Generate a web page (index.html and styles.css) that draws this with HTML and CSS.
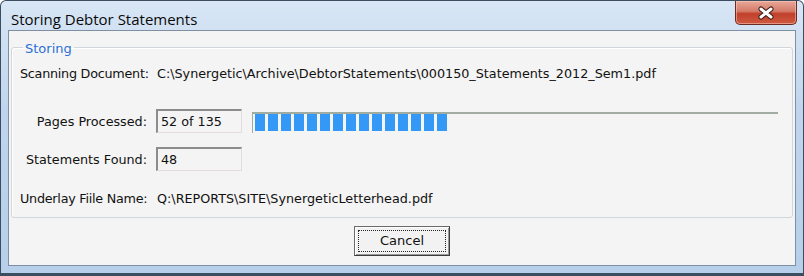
FILE: index.html
```html
<!DOCTYPE html>
<html lang="en">
<head>
    <meta charset="UTF-8">
    <title>Storing Debtor Statements</title>
    <link rel="stylesheet" href="styles.css">
</head>
<body>
    <div class="window">
        <div class="titlebar">
            <span class="title">Storing Debtor Statements</span>
            <button class="close-btn" title="Close">
                <svg width="18" height="14" viewBox="0 0 18 14">
                    <path d="M4 3 L14 11 M14 3 L4 11" stroke="#3a1a16" stroke-width="5" stroke-linecap="round"/>
                    <path d="M4 3 L14 11 M14 3 L4 11" stroke="#ffffff" stroke-width="3" stroke-linecap="round"/>
                </svg>
            </button>
        </div>
        <div class="client">
            <fieldset class="group">
                <legend>Storing</legend>
                <div class="row row-first">
                    <div class="label tight">Scanning Document:</div>
                    <div class="value">C:\Synergetic\Archive\DebtorStatements\000150_Statements_2012_Sem1.pdf</div>
                </div>
                <div class="row row-box">
                    <div class="label right">Pages Processed:</div>
                    <div class="textbox">52 of 135</div>
                    <div class="progress">
                        <div class="progress-fill" style="width: 192px"></div>
                    </div>
                </div>
                <div class="row row-box">
                    <div class="label right">Statements Found:</div>
                    <div class="textbox">48</div>
                </div>
                <div class="row row-last">
                    <div class="label tight">Underlay Fiile Name:</div>
                    <div class="value">Q:\REPORTS\SITE\SynergeticLetterhead.pdf</div>
                </div>
            </fieldset>
            <div class="actions">
                <button class="btn"><span class="btn-focus">Cancel</span></button>
            </div>
        </div>
    </div>
</body>
</html>
```

FILE: styles.css
```css
body {
    margin: 0;
    background: #ffffff;
}
.window {
    width: 804px;
    height: 276px;
    box-sizing: border-box;
    display: flex;
    flex-direction: column;
    border: 1px solid #3d4d60;
    border-bottom-width: 3px;
    border-radius: 6px 6px 0 0;
    background: linear-gradient(to bottom, #d8e6f5, #c0d5ed 40%, #b7cfea);
    padding: 0 7px 7px 7px;
}
.titlebar {
    height: 29px;
    display: flex;
    justify-content: space-between;
    align-items: flex-start;
}
.title {
    font-family: "Open Sans", sans-serif;
    font-size: 15px;
    color: #0a0a0a;
    margin-top: 8px;
    margin-left: 3px;
}
.close-btn {
    width: 62px;
    height: 24px;
    margin-right: -1px;
    padding: 0;
    display: flex;
    justify-content: center;
    align-items: center;
    border: 1px solid #6b2a22;
    border-top: none;
    border-radius: 0 0 5px 5px;
    background: linear-gradient(to bottom, #e9a898, #d47a68 45%, #c0402c 55%, #cf5a40);
    box-shadow: inset 0 0 0 1px rgba(255, 210, 200, 0.5);
}
.client {
    flex: 1;
    display: flex;
    flex-direction: column;
    background: #f4f4f4;
    border: 1px solid #7e8fa3;
    font-family: "DejaVu Sans", sans-serif;
    font-size: 12.75px;
    color: #111;
}
.group {
    margin: 8px 2px 0 2px;
    padding: 7px 14px 9px 8px;
    border: 1px solid #d0d6db;
    border-radius: 3px;
    box-shadow: inset 1px 1px 0 #ffffff;
}
.group legend {
    margin-left: 3px;
    padding: 3px 2px 0 2px;
    color: #2d6fd6;
    font-size: 13px;
    line-height: 14px;
}
.row {
    display: flex;
    align-items: center;
}
.row-first {
    height: 20px;
}
.row-box {
    height: 24px;
    margin-top: 26px;
}
.row-box + .row-box {
    margin-top: 14px;
}
.row-last {
    height: 20px;
    margin-top: 17px;
}
.label {
    width: 136px;
    flex-shrink: 0;
}
.label.tight {
    letter-spacing: -0.25px;
}
.label.right {
    text-align: right;
    box-sizing: border-box;
    padding-right: 9px;
}
.value {
    padding-left: 1px;
}
.textbox {
    width: 86px;
    height: 24px;
    box-sizing: border-box;
    padding: 0 3px;
    line-height: 22px;
    border: 1px solid #e4dcdc;
    border-top: 2px solid #8c8c8c;
    border-left: 2px solid #8c8c8c;
    background: #f4f4f4;
}
.progress {
    flex: 1;
    align-self: flex-start;
    margin: 3px 0 0 10px;
    height: 21px;
    box-sizing: border-box;
    padding: 0 0 2px 2px;
    border-top: 2px solid #a2aba2;
    border-left: 1px solid #a2aba2;
}
.progress-fill {
    height: 17px;
    background: repeating-linear-gradient(to right, #3498f6 0 10px, transparent 10px 13px);
}
.actions {
    display: flex;
    justify-content: center;
    margin-top: 8px;
}
.btn {
    width: 96px;
    height: 30px;
    padding: 3px;
    border: 1px solid #6a6a6a;
    border-right-color: #3c3c3c;
    border-bottom-color: #3c3c3c;
    background: #f2f2f2;
    box-shadow: inset 1px 1px 0 #ffffff, inset -1px -1px 0 #9a9a9a;
    font-family: "DejaVu Sans", sans-serif;
    font-size: 13px;
    color: #111;
}
.btn-focus {
    display: block;
    height: 100%;
    box-sizing: border-box;
    border: 1px dotted #222;
    line-height: 20px;
}
```
